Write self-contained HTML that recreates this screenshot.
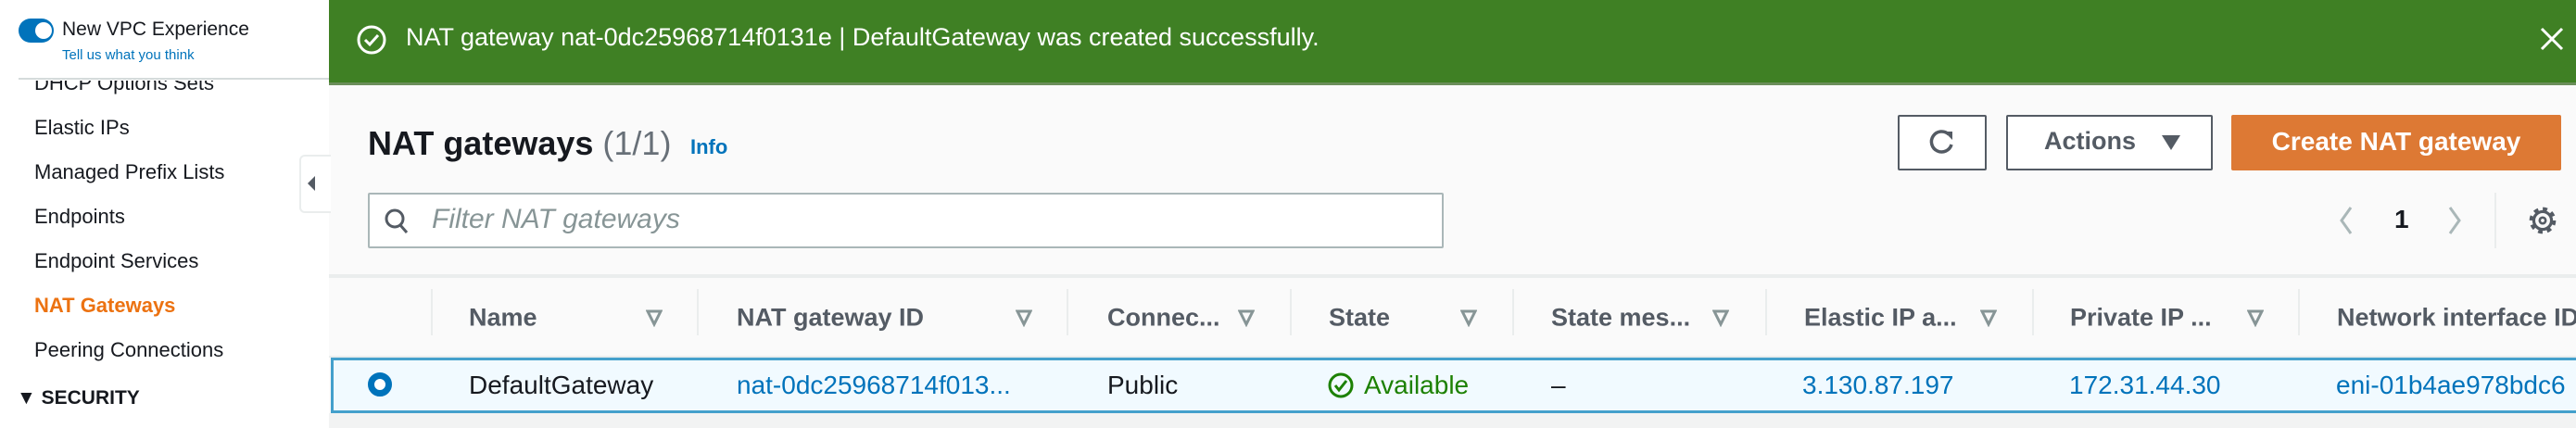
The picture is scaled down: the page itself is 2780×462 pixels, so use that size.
<!DOCTYPE html>
<html><head><style>
*{box-sizing:border-box;margin:0;padding:0}
body{width:2780px;height:462px;overflow:hidden;background:#fafafa;font-family:"Liberation Sans",sans-serif;position:relative;color:#16191f}
.a{position:absolute;white-space:nowrap}
.side{left:0;top:0;width:355px;height:462px;background:#fff}
.si{left:37px;font-size:22px;color:#16191f;transform:translateY(-50%)}
.hd{top:343px;transform:translateY(-50%);font-size:27px;font-weight:bold;color:#545b64}
.cell{top:416px;transform:translateY(-50%);font-size:28px}
.sep{top:312px;width:2px;height:50px;background:#eaeded}
.fi{top:333px}
.blue{color:#0073bb}
</style></head><body>
<div class="a side"></div>
<div class="a" style="left:20px;top:20px;width:38px;height:26px;border-radius:13px;background:#0073bb"></div>
<div class="a" style="left:38px;top:24px;width:18px;height:18px;border-radius:9px;background:#fff"></div>
<div class="a" style="left:67px;top:20px;font-size:21px">New VPC Experience</div>
<div class="a blue" style="left:67px;top:51px;font-size:15px">Tell us what you think</div>
<div class="a" style="left:20px;top:84px;width:335px;height:2px;background:#d5dbdb"></div>
<div class="a" style="left:37px;top:87px;height:15px;overflow:hidden;font-size:22px"><div style="margin-top:-10px">DHCP Options Sets</div></div>
<div class="a si" style="top:138px">Elastic IPs</div>
<div class="a si" style="top:186px">Managed Prefix Lists</div>
<div class="a si" style="top:234px">Endpoints</div>
<div class="a si" style="top:282px">Endpoint Services</div>
<div class="a si" style="top:330px;color:#ec7211;font-weight:bold">NAT Gateways</div>
<div class="a si" style="top:378px">Peering Connections</div>
<div class="a si" style="top:430px;left:18px;font-weight:bold;font-size:21px">▼ SECURITY</div>
<div class="a" style="left:323px;top:167px;width:34px;height:63px;background:#fff;border:2px solid #eaeded;border-right:none;border-radius:6px 0 0 6px"></div>
<div class="a" style="left:332px;top:190px;width:0;height:0;border-top:8px solid transparent;border-bottom:8px solid transparent;border-right:8px solid #545b64"></div>

<div class="a" style="left:355px;top:0;width:2425px;height:92px;background:#3f8024;border-bottom:3px solid #6b8e5a"></div>
<svg class="a" style="left:384px;top:26px" width="34" height="34" viewBox="0 0 34 34"><circle cx="17" cy="17" r="14" fill="none" stroke="#fff" stroke-width="3"/><path d="M10 17l5 5 9-10" fill="none" stroke="#fff" stroke-width="3"/></svg>
<div class="a" style="left:438px;top:25px;font-size:27px;color:#fff">NAT gateway nat-0dc25968714f0131e | DefaultGateway was created successfully.</div>
<svg class="a" style="left:2741px;top:29px" width="26" height="26" viewBox="0 0 26 26"><path d="M2 2L24 24M24 2L2 24" stroke="#fff" stroke-width="3"/></svg>

<div class="a" style="left:397px;top:134px;font-size:36px;font-weight:bold">NAT gateways <span style="font-weight:normal;color:#687078">(1/1)</span></div>
<div class="a blue" style="left:745px;top:146px;font-size:22px;font-weight:bold">Info</div>
<div class="a" style="left:397px;top:208px;width:1161px;height:60px;background:#fff;border:2px solid #aab7b8;border-radius:2px"></div>
<svg class="a" style="left:414px;top:224px" width="28" height="30" viewBox="0 0 28 30"><circle cx="12" cy="12" r="9" fill="none" stroke="#545b64" stroke-width="3"/><path d="M18 19l7 8" stroke="#545b64" stroke-width="3"/></svg>
<div class="a" style="left:466px;top:220px;font-size:30px;font-style:italic;color:#879596">Filter NAT gateways</div>

<div class="a" style="left:2048px;top:124px;width:96px;height:60px;background:#fff;border:2px solid #545b64;border-radius:2px"></div>
<svg class="a" style="left:2078px;top:136px" width="36" height="36" viewBox="0 0 36 36"><path d="M25 9A11 11 0 1 0 28 20" fill="none" stroke="#545b64" stroke-width="3.5"/><path d="M20 6h9v9z" fill="#545b64"/></svg>
<div class="a" style="left:2165px;top:124px;width:223px;height:60px;background:#fff;border:2px solid #545b64;border-radius:2px"></div>
<div class="a" style="left:2206px;top:137px;font-size:27px;font-weight:bold;color:#545b64">Actions</div>
<div class="a" style="left:2333px;top:146px;width:0;height:0;border-left:10px solid transparent;border-right:10px solid transparent;border-top:16px solid #545b64"></div>
<div class="a" style="left:2408px;top:124px;width:356px;height:60px;background:#dd7934;border-radius:2px"></div>
<div class="a" style="left:2408px;top:137px;width:356px;text-align:center;font-size:28px;font-weight:bold;color:#fff">Create NAT gateway</div>

<svg class="a" style="left:2522px;top:222px" width="20" height="32" viewBox="0 0 20 32"><path d="M15 2L5 16L15 30" fill="none" stroke="#aab7b8" stroke-width="3"/></svg>
<div class="a" style="left:2584px;top:221px;font-size:28px;font-weight:bold">1</div>
<svg class="a" style="left:2639px;top:222px" width="20" height="32" viewBox="0 0 20 32"><path d="M5 2L15 16L5 30" fill="none" stroke="#aab7b8" stroke-width="3"/></svg>
<div class="a" style="left:2692px;top:208px;width:2px;height:60px;background:#eaeded"></div>
<svg class="a" style="left:2727px;top:221px" width="34" height="34" viewBox="0 0 32 32"><circle cx="16" cy="16" r="11" fill="none" stroke="#545b64" stroke-width="5" stroke-dasharray="4.3 4.3"/><circle cx="16" cy="16" r="9" fill="none" stroke="#545b64" stroke-width="3"/><circle cx="16" cy="16" r="3" fill="none" stroke="#545b64" stroke-width="2.5"/></svg>

<div class="a" style="left:355px;top:296px;width:2425px;height:4px;background:#eaeded"></div>
<div class="a sep" style="left:465px"></div><div class="a sep" style="left:752px"></div><div class="a sep" style="left:1151px"></div><div class="a sep" style="left:1392px"></div><div class="a sep" style="left:1632px"></div><div class="a sep" style="left:1905px"></div><div class="a sep" style="left:2193px"></div><div class="a sep" style="left:2480px"></div>
<div class="a hd" style="left:506px">Name</div>
<div class="a hd" style="left:795px">NAT gateway ID</div>
<div class="a hd" style="left:1195px">Connec...</div>
<div class="a hd" style="left:1434px">State</div>
<div class="a hd" style="left:1674px">State mes...</div>
<div class="a hd" style="left:1947px">Elastic IP a...</div>
<div class="a hd" style="left:2234px">Private IP ...</div>
<div class="a hd" style="left:2522px">Network interface ID</div>
<svg class="a fi" style="left:697px" width="18" height="20" viewBox="0 0 18 20"><path d="M2 3h14l-7 14z" fill="none" stroke="#879596" stroke-width="3"/></svg>
<svg class="a fi" style="left:1096px" width="18" height="20" viewBox="0 0 18 20"><path d="M2 3h14l-7 14z" fill="none" stroke="#879596" stroke-width="3"/></svg>
<svg class="a fi" style="left:1336px" width="18" height="20" viewBox="0 0 18 20"><path d="M2 3h14l-7 14z" fill="none" stroke="#879596" stroke-width="3"/></svg>
<svg class="a fi" style="left:1576px" width="18" height="20" viewBox="0 0 18 20"><path d="M2 3h14l-7 14z" fill="none" stroke="#879596" stroke-width="3"/></svg>
<svg class="a fi" style="left:1848px" width="18" height="20" viewBox="0 0 18 20"><path d="M2 3h14l-7 14z" fill="none" stroke="#879596" stroke-width="3"/></svg>
<svg class="a fi" style="left:2137px" width="18" height="20" viewBox="0 0 18 20"><path d="M2 3h14l-7 14z" fill="none" stroke="#879596" stroke-width="3"/></svg>
<svg class="a fi" style="left:2425px" width="18" height="20" viewBox="0 0 18 20"><path d="M2 3h14l-7 14z" fill="none" stroke="#879596" stroke-width="3"/></svg>

<div class="a" style="left:355px;top:384px;width:2425px;height:2px;background:#eaeded"></div>
<div class="a" style="left:357px;top:386px;width:2423px;height:60px;background:#f1faff;border:3px solid #44a0cc;border-right:none"></div>
<div class="a" style="left:355px;top:446px;width:2425px;height:16px;background:#f2f3f3"></div>
<div class="a" style="left:397px;top:402px;width:26px;height:26px;border-radius:50%;border:7px solid #0073bb;background:#fff"></div>
<div class="a cell" style="left:506px">DefaultGateway</div>
<div class="a cell blue" style="left:795px">nat-0dc25968714f013...</div>
<div class="a cell" style="left:1195px">Public</div>
<svg class="a" style="left:1432px;top:400px" width="30" height="32" viewBox="0 0 30 32"><circle cx="15" cy="16" r="12" fill="none" stroke="#1d8102" stroke-width="3"/><path d="M9 16l4 5 8-10" fill="none" stroke="#1d8102" stroke-width="3"/></svg>
<div class="a cell" style="left:1472px;color:#1d8102">Available</div>
<div class="a cell" style="left:1674px">–</div>
<div class="a cell blue" style="left:1945px">3.130.87.197</div>
<div class="a cell blue" style="left:2233px">172.31.44.30</div>
<div class="a cell blue" style="left:2521px">eni-01b4ae978bdc6</div>
</body></html>
